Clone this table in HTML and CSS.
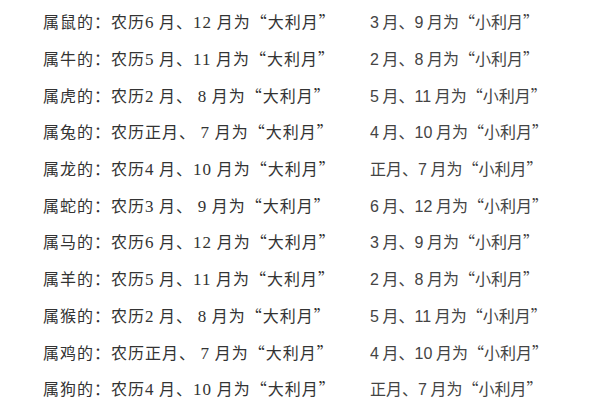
FILE: index.html
```html
<!DOCTYPE html>
<html lang="zh">
<head>
<meta charset="utf-8">
<link rel="stylesheet" href="styles.css">
</head>
<body>
<div class="table">
  <div class="row"><span class="big">属鼠的：农历<span class="n">6</span> 月、<span class="n">12</span> 月为“大利月”</span><span class="small"><span class="d">3</span> 月、<span class="d">9</span> 月为“小利月”</span></div>
  <div class="row"><span class="big">属牛的：农历<span class="n">5</span> 月、<span class="n">11</span> 月为“大利月”</span><span class="small"><span class="d">2</span> 月、<span class="d">8</span> 月为“小利月”</span></div>
  <div class="row"><span class="big">属虎的：农历<span class="n">2</span> 月、 <span class="n">8</span> 月为“大利月”</span><span class="small"><span class="d">5</span> 月、<span class="d">11</span> 月为“小利月”</span></div>
  <div class="row"><span class="big">属兔的：农历正月、 <span class="n">7</span> 月为“大利月”</span><span class="small"><span class="d">4</span> 月、<span class="d">10</span> 月为“小利月”</span></div>
  <div class="row"><span class="big">属龙的：农历<span class="n">4</span> 月、<span class="n">10</span> 月为“大利月”</span><span class="small">正月、<span class="d">7</span> 月为“小利月”</span></div>
  <div class="row"><span class="big">属蛇的：农历<span class="n">3</span> 月、 <span class="n">9</span> 月为“大利月”</span><span class="small"><span class="d">6</span> 月、<span class="d">12</span> 月为“小利月”</span></div>
  <div class="row"><span class="big">属马的：农历<span class="n">6</span> 月、<span class="n">12</span> 月为“大利月”</span><span class="small"><span class="d">3</span> 月、<span class="d">9</span> 月为“小利月”</span></div>
  <div class="row"><span class="big">属羊的：农历<span class="n">5</span> 月、<span class="n">11</span> 月为“大利月”</span><span class="small"><span class="d">2</span> 月、<span class="d">8</span> 月为“小利月”</span></div>
  <div class="row"><span class="big">属猴的：农历<span class="n">2</span> 月、 <span class="n">8</span> 月为“大利月”</span><span class="small"><span class="d">5</span> 月、<span class="d">11</span> 月为“小利月”</span></div>
  <div class="row"><span class="big">属鸡的：农历正月、 <span class="n">7</span> 月为“大利月”</span><span class="small"><span class="d">4</span> 月、<span class="d">10</span> 月为“小利月”</span></div>
  <div class="row"><span class="big">属狗的：农历<span class="n">4</span> 月、<span class="n">10</span> 月为“大利月”</span><span class="small">正月、<span class="d">7</span> 月为“小利月”</span></div>
</div>
</body>
</html>
```
FILE: styles.css
```css
html, body {
  margin: 0;
  padding: 0;
  background: #ffffff;
}
.table {
  padding: 3px 0 0 43px;
  font-family: "Noto Sans CJK SC", "Liberation Serif", serif;
  font-size: 16px;
  color: #333333;
  letter-spacing: 1px;
}
.row {
  display: grid;
  grid-template-columns: 327px auto;
  height: 36.7px;
  align-items: center;
  white-space: pre;
}
.n {
  font-family: "Liberation Serif", serif;
  font-size: 17px;
}
.small {
  color: #444444;
  letter-spacing: 0;
}
.d {
  font-family: "Liberation Sans", sans-serif;
  font-size: 16px;
}
```
